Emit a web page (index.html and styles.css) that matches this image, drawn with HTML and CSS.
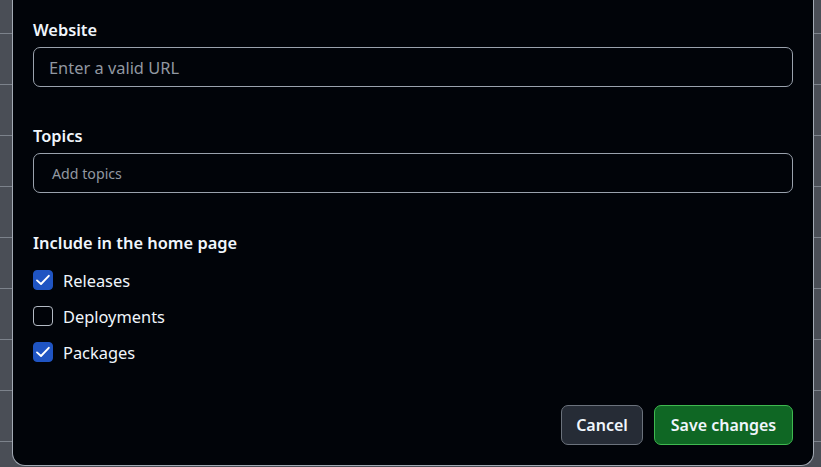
FILE: index.html
```html
<!DOCTYPE html>
<html lang="en">
<head>
<meta charset="utf-8">
<title>Edit repository details</title>
<link rel="stylesheet" href="styles.css">
</head>
<body>
<div class="backdrop">
  <div class="dialog">
    <div class="body">
      <label class="field-label">Website</label>
      <div class="input input-lg"><span class="placeholder">Enter a valid URL</span></div>

      <label class="field-label topics-label">Topics</label>
      <div class="input"><span class="placeholder small">Add topics</span></div>

      <div class="field-label include-label">Include in the home page</div>
      <ul class="checks">
        <li class="check-row">
          <span class="checkbox checked"><svg viewBox="0 0 20 20" width="20" height="20"><path d="M4 10.4 8 14 15.8 5.8" fill="none" stroke="#fff" stroke-width="1.9" stroke-linecap="round" stroke-linejoin="round"/></svg></span>
          <span class="check-label">Releases</span>
        </li>
        <li class="check-row">
          <span class="checkbox"></span>
          <span class="check-label">Deployments</span>
        </li>
        <li class="check-row">
          <span class="checkbox checked"><svg viewBox="0 0 20 20" width="20" height="20"><path d="M4 10.4 8 14 15.8 5.8" fill="none" stroke="#fff" stroke-width="1.9" stroke-linecap="round" stroke-linejoin="round"/></svg></span>
          <span class="check-label">Packages</span>
        </li>
      </ul>
    </div>
    <div class="footer">
      <button class="btn btn-default">Cancel</button>
      <button class="btn btn-primary">Save changes</button>
    </div>
  </div>
</div>
</body>
</html>
```

FILE: styles.css
```css
* { box-sizing: border-box; }
html, body {
  margin: 0;
  padding: 0;
  height: 100%;
}
body {
  background-color: #4a4e56;
  background-image: repeating-linear-gradient(to bottom, transparent 0, transparent 32px, #7c828b 32px, #7c828b 33px, transparent 33px, transparent 51px);
  background-position: 0 1px;
  font-family: "Noto Sans", "Open Sans", "Liberation Sans", sans-serif;
  color: #f0f6fc;
  overflow: hidden;
}
.backdrop {
  padding-left: 12px;
  padding-right: 7px;
}
.dialog {
  height: 466px;
  background: #010409;
  border: 1px solid #a3aab4;
  border-top: none;
  border-radius: 0 0 13px 13px;
  display: flex;
  flex-direction: column;
}
.body {
  padding: 18px 20px 0;
  display: flex;
  flex-direction: column;
  flex: 1;
}
.field-label {
  display: block;
  font-size: 16.4px;
  font-weight: 600;
  line-height: 24px;
  height: 24px;
}
.input {
  margin-top: 5px;
  height: 40px;
  flex: none;
  border: 1px solid #9aa2ad;
  border-radius: 7px;
  display: flex;
  align-items: center;
  padding: 0 15px;
}
.placeholder {
  color: #9198a1;
  font-size: 16.4px;
}
.placeholder.small {
  font-size: 14.2px;
  padding-left: 3px;
}
.topics-label { margin-top: 37px; }
.include-label { margin-top: 38px; }
.checks {
  list-style: none;
  margin: 7px 0 0;
  padding: 0;
}
.check-row {
  height: 36px;
  display: flex;
  align-items: center;
  gap: 10px;
}
.checkbox {
  width: 20px;
  height: 20px;
  border: 1px solid #b3bac4;
  border-radius: 4px;
  display: flex;
  align-items: center;
  justify-content: center;
  flex: none;
  overflow: hidden;
}
.checkbox svg { flex: none; }
.checkbox.checked {
  background: #1f54c2;
  border-color: #1f54c2;
}
.check-label {
  font-size: 16.4px;
}
.footer {
  display: flex;
  justify-content: flex-end;
  gap: 11px;
  padding: 0 20px 20px;
}
.btn {
  height: 40px;
  border-radius: 7px;
  font-family: inherit;
  font-size: 16px;
  font-weight: 600;
  color: #f0f6fc;
  padding: 0;
  cursor: pointer;
}
.btn-default {
  background: #262c36;
  border: 1px solid #6b727c;
  width: 82px;
}
.btn-primary {
  background: #0f6724;
  border: 1px solid #3fb950;
  width: 139px;
}
```
